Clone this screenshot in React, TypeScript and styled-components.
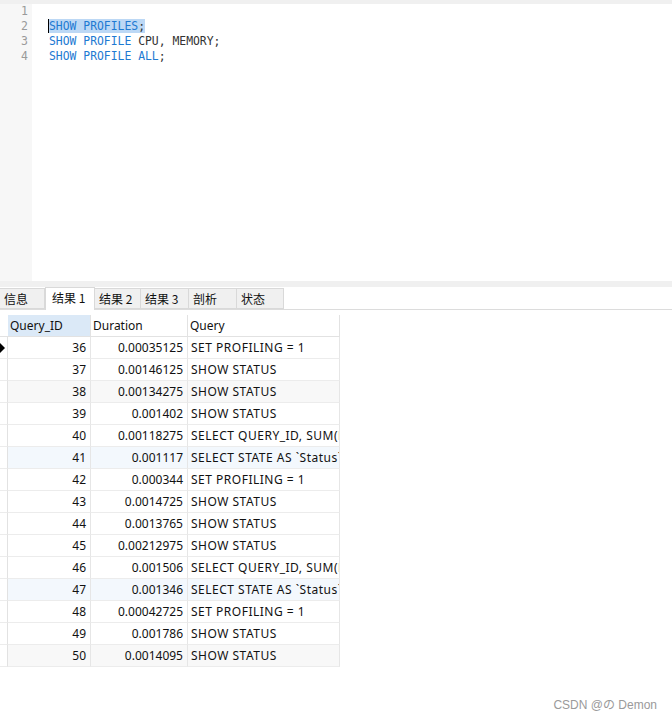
import { Fragment } from "react";
import styled, { createGlobalStyle } from "styled-components";

const GlobalStyle = createGlobalStyle`
  html, body {
    margin: 0;
    padding: 0;
    background: #ffffff;
  }
  body {
    width: 672px;
    height: 721px;
    overflow: hidden;
    font-family: "Noto Sans", "Noto Sans CJK SC", sans-serif;
  }
`;

const Page = styled.div`
  position: relative;
  width: 672px;
  height: 721px;
  display: flex;
  flex-direction: column;
  background: #fff;
`;

const TopStrip = styled.div`
  height: 4px;
  background: #f0f0f0;
`;

const Editor = styled.div`
  height: 277px;
  display: flex;
`;

const Gutter = styled.div`
  width: 32px;
  background: #f7f7f7;
  box-sizing: border-box;
`;

const LineNo = styled.div`
  height: 15px;
  line-height: 15px;
  text-align: right;
  padding-right: 4px;
  font-family: "DejaVu Sans Mono", monospace;
  font-size: 11.5px;
  color: #9a9a9a;
`;

const Code = styled.div`
  flex: 1;
  padding-left: 17px;
`;

const CodeLine = styled.div`
  height: 15px;
  line-height: 15px;
  font-family: "DejaVu Sans Mono", monospace;
  font-size: 11.4px;
  color: #333;
  white-space: pre;
`;

const Kw = styled.span`
  color: #1e7ad2;
`;

const Sel = styled.span`
  background: #bcd8f5;
  border-left: 1px solid #000;
  margin-left: -1px;
`;

const TabStrip = styled.div`
  height: 6px;
  background: #f0f0f0;
`;

const TabBar = styled.div`
  height: 22px;
  display: flex;
  align-items: flex-end;
  border-bottom: 1px solid #dcdcdc;
  background: #fff;
`;

const Tab = styled.div<{ $active?: boolean; $w: number }>`
  width: ${(p) => p.$w}px;
  height: ${(p) => (p.$active ? 23 : 21)}px;
  margin-bottom: ${(p) => (p.$active ? -1 : 0)}px;
  box-sizing: border-box;
  background: ${(p) => (p.$active ? "#ffffff" : "#f0f0f0")};
  border: 1px solid #d9d9d9;
  border-bottom: ${(p) => (p.$active ? "none" : "1px solid #d9d9d9")};
  border-left: ${(p) => (p.$active ? "1px solid #d9d9d9" : "none")};
  font-family: "Noto Sans CJK SC", sans-serif;
  font-size: 12px;
  color: #111;
  padding-left: ${(p) => (p.$active ? 6 : 4)}px;
  line-height: ${(p) => (p.$active ? 19 : 20)}px;
`;

const Grid = styled.div`
  margin-top: 5px;
  width: 340px;
  display: grid;
  grid-template-columns: 8px 83px 97px 152px;
  font-size: 12px;
  color: #111;
`;

const Head = styled.div<{ $on?: boolean; $plain?: boolean }>`
  height: 22px;
  box-sizing: border-box;
  line-height: 21px;
  padding-left: 2px;
  background: ${(p) => (p.$on ? "#dbe9f7" : "#fff")};
  border-right: ${(p) => (p.$plain ? "none" : "1px solid #e2e2e2")};
  border-bottom: 1px solid #e2e2e2;
  white-space: nowrap;
  overflow: hidden;
`;

const Cell = styled.div<{ $tint: string; $right?: boolean }>`
  height: 22px;
  box-sizing: border-box;
  line-height: 21px;
  background: ${(p) => p.$tint};
  border-right: 1px solid #e6e6e6;
  border-bottom: 1px solid #ececec;
  text-align: ${(p) => (p.$right ? "right" : "left")};
  letter-spacing: ${(p) => (p.$right ? 0 : 0.5)}px;
  padding: 0 4px 0 3px;
  white-space: nowrap;
  overflow: hidden;
`;

const Marker = styled.div`
  height: 22px;
  box-sizing: border-box;
  background: #fff;
  border-right: 1px solid #e2e2e2;
  border-bottom: 1px solid #ececec;
  display: flex;
  align-items: center;
`;

const Arrow = styled.div`
  width: 0;
  height: 0;
  border-top: 5px solid transparent;
  border-bottom: 5px solid transparent;
  border-left: 5px solid #000;
`;

const Watermark = styled.div`
  position: absolute;
  right: 15px;
  bottom: 9px;
  font-family: "Liberation Sans", "Noto Sans CJK JP", sans-serif;
  font-size: 12px;
  color: #9a9a9a;
`;

const rows: [number, string, string, string][] = [
  [36, "0.00035125", "SET PROFILING = 1", "#fff"],
  [37, "0.00146125", "SHOW STATUS", "#fff"],
  [38, "0.00134275", "SHOW STATUS", "#f8f8f8"],
  [39, "0.001402", "SHOW STATUS", "#fff"],
  [40, "0.00118275", "SELECT QUERY_ID, SUM(DURATION)", "#fff"],
  [41, "0.001117", "SELECT STATE AS `Status`", "#f3f8fd"],
  [42, "0.000344", "SET PROFILING = 1", "#fff"],
  [43, "0.0014725", "SHOW STATUS", "#fff"],
  [44, "0.0013765", "SHOW STATUS", "#fff"],
  [45, "0.00212975", "SHOW STATUS", "#fff"],
  [46, "0.001506", "SELECT QUERY_ID, SUM(DURATION)", "#fff"],
  [47, "0.001346", "SELECT STATE AS `Status`", "#f3f8fd"],
  [48, "0.00042725", "SET PROFILING = 1", "#fff"],
  [49, "0.001786", "SHOW STATUS", "#fff"],
  [50, "0.0014095", "SHOW STATUS", "#f8f8f8"],
];

const tabs = [
  { label: "信息", w: 45 },
  { label: "结果 1", w: 50, active: true },
  { label: "结果 2", w: 46 },
  { label: "结果 3", w: 48 },
  { label: "剖析", w: 48 },
  { label: "状态", w: 47 },
];

export default function App() {
  return (
    <Page>
      <GlobalStyle />
      <TopStrip />
      <Editor>
        <Gutter>
          {[1, 2, 3, 4].map((n) => (
            <LineNo key={n}>{n}</LineNo>
          ))}
        </Gutter>
        <Code>
          <CodeLine> </CodeLine>
          <CodeLine>
            <Sel>
              <Kw>SHOW PROFILES</Kw>;
            </Sel>
          </CodeLine>
          <CodeLine>
            <Kw>SHOW PROFILE</Kw> CPU, MEMORY;
          </CodeLine>
          <CodeLine>
            <Kw>SHOW PROFILE ALL</Kw>;
          </CodeLine>
        </Code>
      </Editor>
      <TabStrip />
      <TabBar>
        {tabs.map((t) => (
          <Tab key={t.label} $w={t.w} $active={t.active}>
            {t.label}
          </Tab>
        ))}
      </TabBar>
      <Grid>
        <Head $plain />
        <Head $on>Query_ID</Head>
        <Head>Duration</Head>
        <Head>Query</Head>
        {rows.map(([id, dur, q, tint], i) => (
          <Fragment key={id}>
            <Marker>{i === 0 && <Arrow />}</Marker>
            <Cell $tint={tint} $right>
              {id}
            </Cell>
            <Cell $tint={tint} $right>
              {dur}
            </Cell>
            <Cell $tint={tint}>{q}</Cell>
          </Fragment>
        ))}
      </Grid>
      <Watermark>CSDN @の Demon</Watermark>
    </Page>
  );
}
